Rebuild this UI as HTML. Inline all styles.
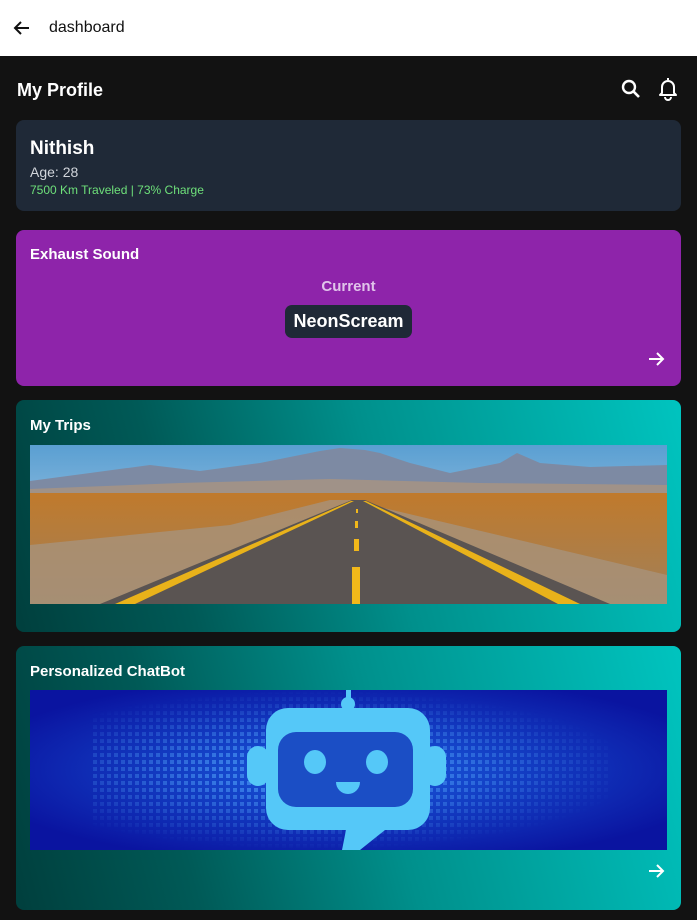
<!DOCTYPE html>
<html><head><style>
*{margin:0;padding:0;box-sizing:border-box}
body{width:697px;height:920px;background:#121212;font-family:"Liberation Sans",sans-serif;position:relative;overflow:hidden;color:#fff}
.top{position:absolute;left:0;top:0;width:697px;height:56px;background:#fff;color:#111}
.card{position:absolute;left:16px;width:665px;border-radius:8px}
.teal{background:linear-gradient(75deg,#003f3d 0%,#005a57 25%,#00908c 55%,#00c4bf 100%)}
h3{position:absolute;left:14px;font-size:15px;font-weight:bold}
</style></head><body>
<div class="top">
<svg style="position:absolute;left:13px;top:19px" width="18" height="18" viewBox="0 0 18 18"><path d="M16 9H3M8 3L2 9l6 6" stroke="#111" stroke-width="2" fill="none"/></svg>
<div style="position:absolute;left:49px;top:19px;font-size:16px">dashboard</div>
</div>
<div style="position:absolute;left:17px;top:80px;font-size:18px;font-weight:bold">My Profile</div>
<svg style="position:absolute;left:620px;top:78px" width="22" height="22" viewBox="0 0 22 22"><circle cx="9" cy="9" r="6" stroke="#fff" stroke-width="2.4" fill="none"/><path d="M13.5 13.5L19 19" stroke="#fff" stroke-width="2.6"/></svg>
<svg style="position:absolute;left:656px;top:76px" width="24" height="26" viewBox="0 0 24 26"><path d="M12 2v2M6 17V11a6 6 0 0112 0v6l2 2H4z" stroke="#fff" stroke-width="2" fill="none" stroke-linejoin="round"/><path d="M9 21a3 3 0 006 0" stroke="#fff" stroke-width="2" fill="none"/></svg>

<div class="card" style="top:120px;height:91px;background:#1f2937">
<div style="position:absolute;left:14px;top:18px;font-size:19px;font-weight:bold">Nithish</div>
<div style="position:absolute;left:14px;top:44px;font-size:14px;color:#d1d5db">Age: 28</div>
<div style="position:absolute;left:14px;top:63px;font-size:12px;color:#6ee07a">7500 Km Traveled | 73% Charge</div>
</div>

<div class="card" style="top:230px;height:156px;background:#8e24aa">
<h3 style="top:16px">Exhaust Sound</h3>
<div style="position:absolute;left:0;width:665px;top:48px;text-align:center;font-size:15px;font-weight:bold;color:#e0c4ea">Current</div>
<div style="position:absolute;left:269px;top:75px;width:127px;height:33px;border-radius:7px;background:#1f2937;text-align:center;line-height:33px;font-size:18px;font-weight:bold">NeonScream</div>
<svg style="position:absolute;left:631px;top:120px" width="18" height="18" viewBox="0 0 18 18"><path d="M2 9h13M10 3l6 6-6 6" stroke="#fff" stroke-width="2" fill="none"/></svg>
</div>

<div class="card teal" style="top:400px;height:232px">
<h3 style="top:17px">My Trips</h3>
<svg style="position:absolute;left:14px;top:45px" width="637" height="159" viewBox="0 0 637 159">
<defs><linearGradient id="sky" x1="0" y1="0" x2="0" y2="1"><stop offset="0" stop-color="#5a9fd2"/><stop offset="1" stop-color="#c6dcec"/></linearGradient>
<linearGradient id="gr" x1="0" y1="0" x2="0" y2="1"><stop offset="0" stop-color="#c07a2c"/><stop offset="1" stop-color="#a0805a"/></linearGradient></defs>
<rect width="637" height="159" fill="url(#sky)"/>
<path d="M0 36L60 28 120 20 170 26 230 18 290 6 310 3 335 5 350 8 380 18 420 28 470 18 487 8 510 18 560 22 637 20V56H0z" fill="#7d8aa3"/>
<path d="M0 44L150 38 300 34 450 38 637 40V56H0z" fill="#a09288"/>
<rect y="48" width="637" height="111" fill="url(#gr)"/>
<path d="M0 100L200 80 300 55 320 55 637 130V159H0z" fill="#a8927a" opacity="0.8"/>
<path d="M70 159L322 55 335 55 580 159z" fill="#5a5452"/>
<path d="M85 159L321 56 324 56 105 159zM550 159L336 56 333 56 528 159z" fill="#e9b21a"/>
<path d="M322 122h8v37h-8zM324 94h5v12h-5zM325 76h3v7h-3zM326 64h2v4h-2z" fill="#f2b81a"/>
</svg>
</div>

<div class="card teal" style="top:646px;height:264px">
<h3 style="top:17px">Personalized ChatBot</h3>
<svg style="position:absolute;left:14px;top:44px" width="637" height="160" viewBox="0 0 637 160">
<defs><radialGradient id="bl" cx="0.5" cy="0.5" r="0.6"><stop offset="0" stop-color="#1a5fe0"/><stop offset="1" stop-color="#0a14a0"/></radialGradient>
<pattern id="px" width="7" height="7" patternUnits="userSpaceOnUse"><rect width="4" height="4" fill="#5ab0ff" opacity="0.5"/></pattern>
<radialGradient id="fade" cx="0.45" cy="0.5" r="0.5"><stop offset="0.3" stop-color="#fff"/><stop offset="1" stop-color="#000"/></radialGradient>
<mask id="m"><rect width="637" height="160" fill="url(#fade)"/></mask></defs>
<rect width="637" height="160" fill="url(#bl)"/>
<rect x="60" y="0" width="520" height="160" fill="url(#px)" mask="url(#m)"/>
<g fill="#55c8f8">
<rect x="316" y="0" width="5" height="12"/><circle cx="318" cy="14" r="7"/>
<path d="M258 18h120a22 22 0 0122 22v78a22 22 0 01-22 22H355l-25 20h-18l4-20h-58a22 22 0 01-22-22V40a22 22 0 0122-22z"/>
<rect x="217" y="56" width="22" height="40" rx="11"/><rect x="394" y="56" width="22" height="40" rx="11"/>
</g>
<rect x="248" y="42" width="135" height="75" rx="18" fill="#1b4ec5"/>
<g fill="#55c8f8"><ellipse cx="285" cy="72" rx="11" ry="12"/><ellipse cx="347" cy="72" rx="11" ry="12"/><path d="M306 92h24a12 12 0 01-24 0z"/></g>
</svg>
<svg style="position:absolute;left:631px;top:216px" width="18" height="18" viewBox="0 0 18 18"><path d="M2 9h13M10 3l6 6-6 6" stroke="#fff" stroke-width="2" fill="none"/></svg>
</div>
</body></html>
